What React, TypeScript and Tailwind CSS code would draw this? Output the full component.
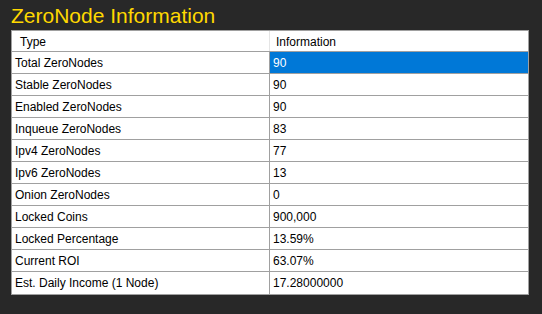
import React from "react";

const rows: [string, string][] = [
  ["Total ZeroNodes", "90"],
  ["Stable ZeroNodes", "90"],
  ["Enabled ZeroNodes", "90"],
  ["Inqueue ZeroNodes", "83"],
  ["Ipv4 ZeroNodes", "77"],
  ["Ipv6 ZeroNodes", "13"],
  ["Onion ZeroNodes", "0"],
  ["Locked Coins", "900,000"],
  ["Locked Percentage", "13.59%"],
  ["Current ROI", "63.07%"],
  ["Est. Daily Income (1 Node)", "17.28000000"],
];

export default function App() {
  return (
    <div
      className="w-[542px] h-[314px] bg-[#282828] overflow-hidden"
      style={{ fontFamily: '"Liberation Sans", Arial, sans-serif' }}
    >
      <div className="h-[30px] pl-[11px] pt-[3px] text-[21px] leading-[26px] text-[#ffd800]">
        ZeroNode Information
      </div>
      <div className="ml-[11px] w-[518px] border border-[#a0a0a0] bg-white text-[12px] text-black">
        <div className="flex h-[21px] border-b border-[#a0a0a0]">
          <div className="w-[258px] border-r border-[#e5e5e5] pl-[8px] pt-[2px] leading-[18px]">Type</div>
          <div className="flex-1 pl-[6px] pt-[2px] leading-[18px]">Information</div>
        </div>
        {rows.map(([k, v], i) => (
          <div
            key={k}
            className={`flex h-[22px] ${i < rows.length - 1 ? "border-b" : ""} border-[#a0a0a0]`}
          >
            <div className="w-[258px] border-r border-[#a0a0a0] pl-[3px] pt-[2px] leading-[19px]">{k}</div>
            <div
              className={`flex-1 pl-[3px] pt-[2px] leading-[19px] ${i === 0 ? "bg-[#0078d7] text-white" : ""}`}
            >
              {v}
            </div>
          </div>
        ))}
      </div>
    </div>
  );
}
